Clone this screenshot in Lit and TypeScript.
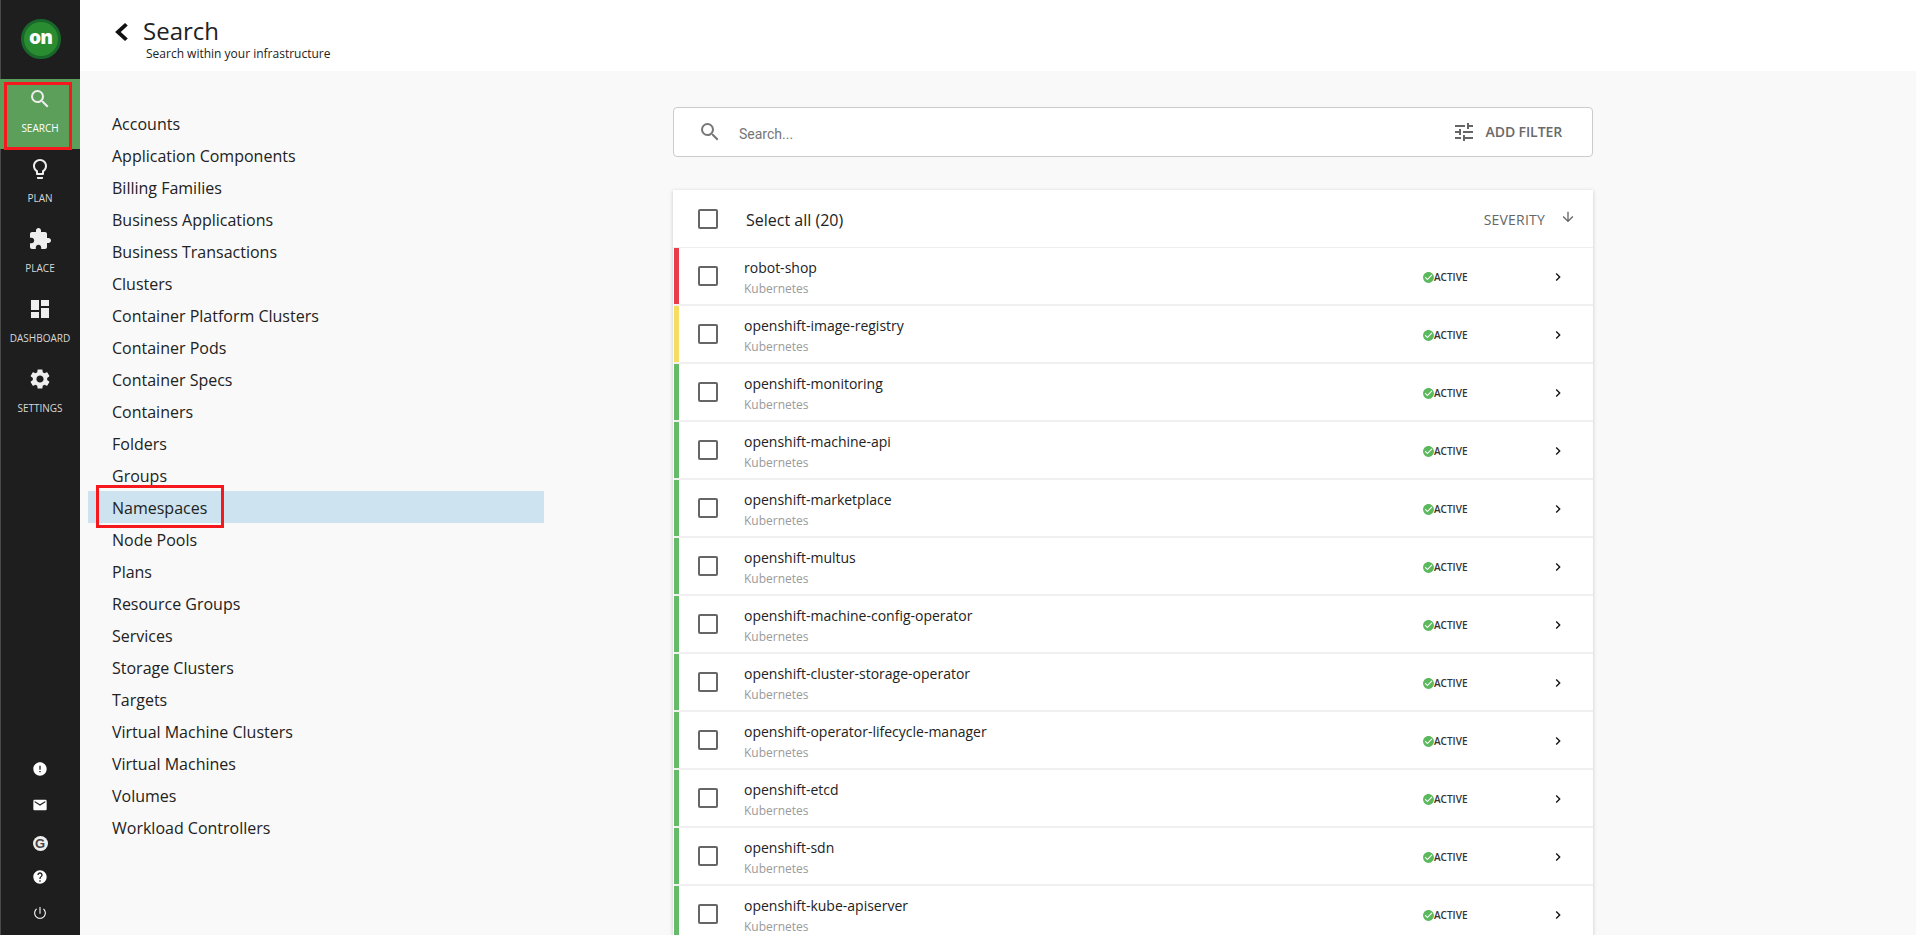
import { LitElement, html, css, svg } from "lit";
import { customElement } from "lit/decorators.js";

const P: Record<string, string> = {
  search: "M15.5 14h-.79l-.28-.27A6.471 6.471 0 0 0 16 9.5 6.5 6.5 0 1 0 9.5 16c1.61 0 3.09-.59 4.23-1.57l.27.28v.79l5 4.99L20.49 19l-4.99-5zm-6 0C7.01 14 5 11.99 5 9.5S7.01 5 9.5 5 14 7.01 14 9.5 11.99 14 9.5 14z",
  bulb: "M9 21c0 .55.45 1 1 1h4c.55 0 1-.45 1-1v-1H9v1zm3-19C8.14 2 5 5.14 5 9c0 2.38 1.19 4.47 3 5.74V17c0 .55.45 1 1 1h6c.55 0 1-.45 1-1v-2.26c1.81-1.27 3-3.36 3-5.74 0-3.86-3.14-7-7-7zm2.85 11.1l-.85.6V16h-4v-2.3l-.85-.6C7.8 12.16 7 10.63 7 9c0-2.76 2.24-5 5-5s5 2.24 5 5c0 1.63-.8 3.16-2.15 4.1z",
  puzzle: "M20.5 11H19V7c0-1.1-.9-2-2-2h-4V3.5C13 2.12 11.88 1 10.5 1S8 2.12 8 3.5V5H4c-1.1 0-1.99.9-1.99 2v3.8H3.5c1.49 0 2.7 1.21 2.7 2.7s-1.21 2.7-2.7 2.7H2V20c0 1.1.9 2 2 2h3.8v-1.5c0-1.49 1.21-2.7 2.7-2.7 1.49 0 2.7 1.21 2.7 2.7V22H17c1.1 0 2-.9 2-2v-4h1.5c1.38 0 2.5-1.12 2.5-2.5S21.88 11 20.5 11z",
  dashboard: "M3 13h8V3H3v10zm0 8h8v-6H3v6zm10 0h8V11h-8v10zm0-18v6h8V3h-8z",
  settings: "M19.14 12.94c.04-.3.06-.61.06-.94 0-.32-.02-.64-.07-.94l2.03-1.58c.18-.14.23-.41.12-.61l-1.92-3.32c-.12-.22-.37-.29-.59-.22l-2.39.96c-.5-.38-1.03-.7-1.62-.94l-.36-2.54c-.04-.24-.24-.41-.48-.41h-3.84c-.24 0-.43.17-.47.41l-.36 2.54c-.59.24-1.13.57-1.62.94l-2.39-.96c-.22-.08-.47 0-.59.22L2.74 8.87c-.12.21-.08.47.12.61l2.03 1.58c-.05.3-.09.63-.09.94s.02.64.07.94l-2.03 1.58c-.18.14-.23.41-.12.61l1.92 3.32c.12.22.37.29.59.22l2.39-.96c.5.38 1.03.7 1.62.94l.36 2.54c.05.24.24.41.48.41h3.84c.24 0 .44-.17.47-.41l.36-2.54c.59-.24 1.13-.56 1.62-.94l2.39.96c.22.08.47 0 .59-.22l1.92-3.32c.12-.22.07-.47-.12-.61l-2.01-1.58zM12 15.6c-1.98 0-3.6-1.62-3.6-3.6s1.62-3.6 3.6-3.6 3.6 1.62 3.6 3.6-1.62 3.6-3.6 3.6z",
  error: "M12 2C6.48 2 2 6.48 2 12s4.48 10 10 10 10-4.48 10-10S17.52 2 12 2zm1 15h-2v-2h2v2zm0-4h-2V7h2v6z",
  mail: "M20 4H4c-1.1 0-1.99.9-1.99 2L2 18c0 1.1.9 2 2 2h16c1.1 0 2-.9 2-2V6c0-1.1-.9-2-2-2zm0 4l-8 5-8-5V6l8 5 8-5v2z",
  help: "M12 2C6.48 2 2 6.48 2 12s4.48 10 10 10 10-4.48 10-10S17.52 2 12 2zm1 17h-2v-2h2v2zm2.07-7.75l-.9.92C13.45 12.9 13 13.5 13 15h-2v-.5c0-1.1.45-2.1 1.17-2.83l1.24-1.26c.37-.36.59-.86.59-1.41 0-1.1-.9-2-2-2s-2 .9-2 2H8c0-2.21 1.79-4 4-4s4 1.79 4 4c0 .88-.36 1.68-.93 2.25z",
  power: "M12.8 3h-1.6v10h1.6V3zm4.9 2.3l-1.15 1.15C18.1 7.8 19.2 9.8 19.2 12c0 3.98-3.22 7.2-7.2 7.2S4.8 15.98 4.8 12c0-2.2 1.1-4.2 2.65-5.55L6.3 5.3C4.3 7 3.2 9.3 3.2 12c0 4.86 3.94 8.8 8.8 8.8s8.8-3.94 8.8-8.8c0-2.7-1.1-5-3.1-6.7z",
  tune: "M3 17v2h6v-2H3zM3 5v2h10V5H3zm10 16v-2h8v-2h-8v-2h-2v6h2zM7 9v2H3v2h4v2h2V9H7zm14 4v-2H11v2h10zm-6-4h2V7h4V5h-4V3h-2v6z",
  check: "M12 2C6.48 2 2 6.48 2 12s4.48 10 10 10 10-4.48 10-10S17.52 2 12 2zm-2 15l-5-5 1.41-1.41L10 14.17l7.59-7.59L19 8l-9 9z",
  down: "M20 12l-1.41-1.41L13 16.17V4h-2v12.17l-5.58-5.59L4 12l8 8 8-8z",
  left: "M17.2 5L14.2 2.2 3.4 12l10.8 9.8 3-2.8L9.6 12z",
  right: "M10 6L8.59 7.41 13.17 12l-4.58 4.58L10 18l6-6z",
};

const icon = (name: string, size: number, cls = "") => html`<svg class=${cls} width=${size} height=${size} viewBox="0 0 24 24" fill="currentColor">${svg`<path d=${P[name]}></path>`}</svg>`;

const NAV = [
  ["search", "SEARCH"],
  ["bulb", "PLAN"],
  ["puzzle", "PLACE"],
  ["dashboard", "DASHBOARD"],
  ["settings", "SETTINGS"],
];

const CATS = ["Accounts", "Application Components", "Billing Families", "Business Applications", "Business Transactions", "Clusters", "Container Platform Clusters", "Container Pods", "Container Specs", "Containers", "Folders", "Groups", "Namespaces", "Node Pools", "Plans", "Resource Groups", "Services", "Storage Clusters", "Targets", "Virtual Machine Clusters", "Virtual Machines", "Volumes", "Workload Controllers"];

const ROWS: [string, string][] = [
  ["robot-shop", "red"],
  ["openshift-image-registry", "yellow"],
  ["openshift-monitoring", "green"],
  ["openshift-machine-api", "green"],
  ["openshift-marketplace", "green"],
  ["openshift-multus", "green"],
  ["openshift-machine-config-operator", "green"],
  ["openshift-cluster-storage-operator", "green"],
  ["openshift-operator-lifecycle-manager", "green"],
  ["openshift-etcd", "green"],
  ["openshift-sdn", "green"],
  ["openshift-kube-apiserver", "green"],
];

@customElement("app-root")
export class AppRoot extends LitElement {
  static styles = css`
    :host { display: block; height: 100vh; overflow: hidden; font-family: "Open Sans", sans-serif; color: #222; background: #f9f9f9; }
    svg { display: block; flex: none; }
    .shell { display: flex; height: 935px; }
    .side { width: 80px; flex: none; box-sizing: border-box; background: #1e1e1e; border-left: 1px solid #4a4a4a; display: flex; flex-direction: column; color: #fff; }
    .logo-wrap { height: 79px; flex: none; display: flex; justify-content: center; padding-top: 19px; box-sizing: border-box; }
    .logo { width: 40px; height: 40px; border-radius: 50%; box-sizing: border-box; background: #2a8c30; border: 3px solid #17682a; display: flex; align-items: center; justify-content: center; color: #fff; font-weight: 800; font-size: 19px; letter-spacing: -0.8px; line-height: 1; padding-bottom: 3px; }
    .nav { height: 70px; flex: none; position: relative; display: flex; flex-direction: column; align-items: center; box-sizing: border-box; padding-top: 8px; margin-left: -1px; color: #eee; }
    .nav .lab { font-size: 10px; line-height: 14px; margin-top: 10px; color: #d8d8d8; }
    .nav.active { background: #5b9f5b; }
    .nav.active .lab { color: #fff; }
    .mark { position: absolute; border: 3px solid #f5191e; box-sizing: border-box; pointer-events: none; }
    .mark.m1 { left: 4px; top: 3px; width: 68px; height: 68px; }
    .mark.m2 { left: 8px; top: -6px; width: 128px; height: 43px; }
    .bottom { margin-top: auto; display: flex; flex-direction: column; align-items: center; gap: 20px; padding-bottom: 14px; margin-left: -1px; }
    .gbadge { width: 15px; height: 15px; margin: 3px 0 -2px; border-radius: 50%; background: #eee; color: #444; font-weight: 800; font-size: 13px; line-height: 15px; text-align: center; font-family: "Liberation Sans", sans-serif; }
    .main { flex: 1; min-width: 0; display: flex; flex-direction: column; }
    .head { height: 71px; flex: none; background: #fff; display: flex; box-sizing: border-box; padding: 15px 0 0 32px; }
    .head .back { color: #111; margin-top: 6px; }
    .titles { margin-left: 9px; }
    .t1 { font-size: 24px; line-height: 31px; color: #222; }
    .t2 { font-size: 12px; line-height: 16px; margin-left: 3px; color: #222; }
    .body { flex: 1; min-height: 0; display: flex; padding-left: 8px; }
    .cats { width: 456px; flex: none; padding-top: 36px; }
    .cat { height: 32px; position: relative; padding-left: 24px; font-size: 16px; line-height: 34px; color: #222; }
    .cat.sel { background: #cde3ef; }
    .right { margin-left: 129px; width: 920px; flex: none; padding-top: 36px; }
    .searchbar { height: 50px; box-sizing: border-box; background: #fff; border: 1px solid #ccc; border-radius: 4px; display: flex; align-items: center; padding: 0 30px 0 24px; color: #777; }
    .ph { margin-left: 17px; font-family: Roboto, sans-serif; font-size: 14px; color: #757575; padding-top: 4px; flex: 1; }
    .filter { font-size: 14px; font-weight: 600; color: #6a6a6a; margin-left: 10px; padding-bottom: 1px; letter-spacing: -0.1px; }
    .tune { color: #666; }
    .card { margin-top: 33px; background: #fff; box-shadow: 0 1px 4px rgba(0, 0, 0, 0.2); }
    .chead { height: 58px; box-sizing: border-box; border-bottom: 1px solid #eee; display: flex; align-items: center; padding-left: 25px; padding-right: 17px; }
    .box { width: 20px; height: 20px; flex: none; box-sizing: border-box; border: 2px solid #666; border-radius: 2px; background: #fff; }
    .sa { font-size: 16px; margin-left: 28px; flex: 1; color: #222; padding-top: 2px; }
    .sev { font-size: 14px; font-weight: 500; color: #666; letter-spacing: 0.2px; padding-top: 2px; }
    .arrow { color: #666; margin-left: 15px; margin-top: -3px; }
    .row { height: 56px; margin-bottom: 2px; border-left: 5px solid; margin-left: 1px; box-sizing: border-box; display: flex; align-items: center; padding-left: 19px; background: #fff; box-shadow: 0 2px 0 #f0f0f0; }
    .row.red { border-left-color: #e63f4b; }
    .row.yellow { border-left-color: #f5dc62; }
    .row.green { border-left-color: #66bb6a; }
    .info { margin-left: 26px; width: 678px; flex: none; align-self: flex-start; padding-top: 10px; }
    .name { font-size: 14px; line-height: 20px; color: #222; }
    .sub { font-size: 12px; line-height: 16px; margin-top: 3px; color: #9a9a9a; }
    .status { width: 128px; flex: none; display: flex; align-items: center; font-size: 10px; font-weight: 600; color: #333; padding-top: 2px; }
    .status svg { color: #5cb85c; }
    .status span { margin-left: -1px; }
    .chev { color: #111; margin-top: 2px; }
  `;

  render() {
    return html`<div class="shell">
      <aside class="side">
        <div class="logo-wrap"><div class="logo">on</div></div>
        ${NAV.map(([ic, lab], i) => html`<div class="nav ${i === 0 ? "active" : ""}">
          ${icon(ic, 24)}
          <div class="lab">${lab}</div>
          ${i === 0 ? html`<div class="mark m1"></div>` : ""}
        </div>`)}
        <div class="bottom">
          ${icon("error", 16)}
          ${icon("mail", 16)}
          <div class="gbadge">G</div>
          ${icon("help", 16)}
          ${icon("power", 16)}
        </div>
      </aside>
      <div class="main">
        <header class="head">
          ${icon("left", 22, "back")}
          <div class="titles">
            <div class="t1">Search</div>
            <div class="t2">Search within your infrastructure</div>
          </div>
        </header>
        <div class="body">
          <nav class="cats">
            ${CATS.map((c) => html`<div class="cat ${c === "Namespaces" ? "sel" : ""}">${c}${c === "Namespaces" ? html`<div class="mark m2"></div>` : ""}</div>`)}
          </nav>
          <section class="right">
            <div class="searchbar">
              ${icon("search", 24)}
              <div class="ph">Search...</div>
              ${icon("tune", 24, "tune")}
              <div class="filter">ADD FILTER</div>
            </div>
            <div class="card">
              <div class="chead">
                <div class="box"></div>
                <div class="sa">Select all (20)</div>
                <div class="sev">SEVERITY</div>
                ${icon("down", 16, "arrow")}
              </div>
              ${ROWS.map(([n, c]) => html`<div class="row ${c}">
                <div class="box"></div>
                <div class="info"><div class="name">${n}</div><div class="sub">Kubernetes</div></div>
                <div class="status">${icon("check", 13)}<span>ACTIVE</span></div>
                ${icon("right", 16, "chev")}
              </div>`)}
            </div>
          </section>
        </div>
      </div>
    </div>`;
  }
}
